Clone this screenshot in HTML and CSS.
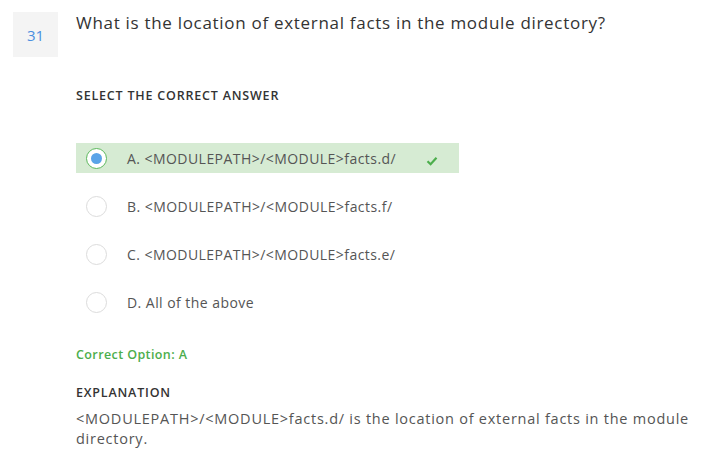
FILE: index.html
```html
<!DOCTYPE html>
<html>
<head>
<meta charset="utf-8">
<link rel="stylesheet" href="styles.css">
</head>
<body>
<div class="question">
  <div class="qnum">31</div>
  <div class="qbody">
    <h2 class="qtext">What is the location of external facts in the module directory?</h2>
    <div class="label select-label">SELECT THE CORRECT ANSWER</div>
    <ul class="options">
      <li class="option correct">
        <span class="radio checked"><span class="dot"></span></span>
        <span class="otext">A. &lt;MODULEPATH&gt;/&lt;MODULE&gt;facts.d/</span>
        <svg class="check" width="12" height="10" viewBox="0 0 12 10"><path d="M1.5 5.2 L4.6 8.2 L10.5 1.8" fill="none" stroke="#4cae4c" stroke-width="2.2"/></svg>
      </li>
      <li class="option">
        <span class="radio"></span>
        <span class="otext">B. &lt;MODULEPATH&gt;/&lt;MODULE&gt;facts.f/</span>
      </li>
      <li class="option">
        <span class="radio"></span>
        <span class="otext">C. &lt;MODULEPATH&gt;/&lt;MODULE&gt;facts.e/</span>
      </li>
      <li class="option">
        <span class="radio"></span>
        <span class="otext">D. All of the above</span>
      </li>
    </ul>
    <div class="correct-option">Correct Option: A</div>
    <div class="label expl-label">EXPLANATION</div>
    <p class="expl">&lt;MODULEPATH&gt;/&lt;MODULE&gt;facts.d/ is the location of external facts in the module directory.</p>
  </div>
</div>
</body>
</html>
```
FILE: styles.css
```css
html, body {
  margin: 0;
  padding: 0;
  background: #fff;
}
body {
  font-family: "Open Sans", "Liberation Sans", sans-serif;
  color: #555;
}
.question {
  display: flex;
  padding: 12px 0 0 13px;
  gap: 18px;
}
.qnum {
  flex: none;
  width: 45px;
  height: 45px;
  background: #f4f4f4;
  color: #4a8fe0;
  font-size: 15px;
  display: flex;
  align-items: center;
  justify-content: center;
}
.qbody {
  flex: 1;
  padding-right: 30px;
}
.qtext {
  margin: 0;
  font-size: 17px;
  font-weight: 400;
  letter-spacing: 0.7px;
  color: #333;
  line-height: 22px;
}
.label {
  font-size: 12.5px;
  font-weight: 600;
  color: #333;
  letter-spacing: 0.8px;
}
.select-label {
  margin-top: 53px;
}
.options {
  list-style: none;
  margin: 39px 0 0 0;
  padding: 0;
  width: 383px;
}
.option {
  display: flex;
  align-items: center;
  height: 30px;
  margin-bottom: 18px;
  font-size: 14px;
  letter-spacing: 0.45px;
  color: #555;
}
.option.correct {
  background: #d6ebd3;
}
.radio {
  flex: none;
  box-sizing: border-box;
  width: 21px;
  height: 21px;
  border-radius: 50%;
  border: 1px solid #dcdcdc;
  background: #fff;
  margin-left: 10px;
  margin-right: 20px;
  display: flex;
  align-items: center;
  justify-content: center;
}
.radio.checked {
  border: 1.5px solid #5cb85c;
}
.dot {
  width: 11px;
  height: 11px;
  border-radius: 50%;
  background: #5aa4e8;
}
.check {
  margin-left: 30px;
  margin-top: 6px;
}
.correct-option {
  margin-top: 29px;
  font-size: 12.5px;
  font-weight: 600;
  letter-spacing: 0.4px;
  color: #4cae4c;
}
.expl-label {
  margin-top: 21px;
}
.expl {
  margin: 8px 0 0 0;
  font-size: 14.5px;
  letter-spacing: 0.75px;
  line-height: 20px;
  color: #555;
}
```
